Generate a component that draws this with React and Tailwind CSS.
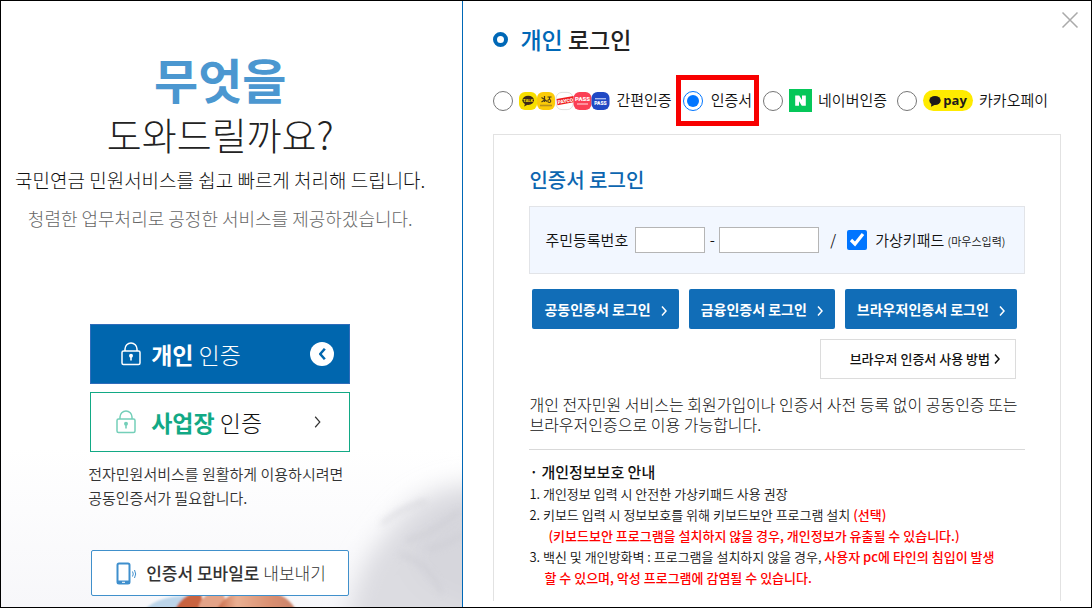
import React, { useState } from 'react';

const METHODS = [
  { id: 'simple', label: '간편인증' },
  { id: 'cert', label: '인증서' },
  { id: 'naver', label: '네이버인증' },
  { id: 'kakao', label: '카카오페이' },
];

const LockIcon = ({ className }) => (
  <svg viewBox="0 0 20 24" fill="none" stroke="currentColor" className={`h-6 w-5 ${className}`} aria-hidden="true">
    <rect x="1" y="9" width="18" height="13.500" rx="1.500" strokeWidth="1.500" />
    <path d="M4 9V7a6 6 0 0 1 12 0v2" strokeWidth="1.500" />
    <circle cx="10" cy="13.800" r="2" fill="currentColor" stroke="none" />
    <path d="M10 14.500v4" strokeWidth="1.600" />
  </svg>
);

const Chevron = ({ className, strokeWidth = 1.5 }) => (
  <svg viewBox="0 0 6 12" fill="none" stroke="currentColor" strokeWidth={strokeWidth} className={className} aria-hidden="true">
    <path d="M1 1.500 5 6 1 10.500" />
  </svg>
);

const PhoneIcon = () => (
  <svg viewBox="0 0 22 24" className="h-6 w-[22px] text-[#3f8fcd]" fill="none" stroke="currentColor" aria-hidden="true">
    <rect x="1.500" y="2.500" width="12" height="20" rx="1.500" strokeWidth="2" />
    <path d="M1.500 21h12" strokeWidth="3" />
    <path d="M6 21.300h3" stroke="#fff" strokeWidth="1" />
    <path d="M16.500 10.500q1.500 2.500 0 5M18.500 9q2.400 4 0 8" strokeWidth="1" />
  </svg>
);

const SimpleAuthLogos = () => (
  <svg viewBox="0 0 91 20" className="h-5 w-[91px]" aria-hidden="true" fontFamily="Roboto, sans-serif" fontWeight="900" textAnchor="middle">
    <rect x="0" y="1" width="18" height="18" rx="6" fill="#f7df00" />
    <ellipse cx="9.2" cy="9.3" rx="5.8" ry="4.6" fill="#3b2a1a" />
    <path d="M6 12.500 5.200 15.600 9 13.400z" fill="#3b2a1a" />
    <text x="9.2" y="11" fontSize="4.200" fill="#f7df00">TALK</text>
    <rect x="18" y="1" width="18" height="18" rx="6" fill="#fccb08" />
    <path d="M22.500 6.500l3 2M25.500 5v6M22.500 11l3-2M25.500 8.500l2.500 2M28.500 6h4M30.500 6v2.500" stroke="#4a3a1a" strokeWidth="1.200" fill="none" />
    <circle cx="30.300" cy="10" r="1.500" stroke="#4a3a1a" strokeWidth="1.100" fill="none" />
    <path d="M21 14.500h12" stroke="#b8921a" strokeWidth="1.600" />
    <rect x="37" y="1.400" width="17.200" height="17.200" rx="6" fill="#fff" stroke="#d5d5d5" strokeWidth=".8" />
    <path d="M37.500 8 54.500 5V11.200L38.500 14.200z" fill="#ef1c1c" />
    <text x="46.300" y="11.800" fontSize="5" fill="#fff" transform="rotate(-10 46 10)">PAYCO</text>
    <rect x="54.500" y="1" width="18" height="18" rx="6" fill="#fb3f55" />
    <text x="63.500" y="10" fontSize="6" fill="#fff">PASS</text>
    <path d="M58 13h11" stroke="#ffb0ba" strokeWidth="1.400" />
    <rect x="72.500" y="1" width="18" height="18" rx="6" fill="#2049c4" />
    <path d="M76 7.700h11" stroke="#a9bbf0" strokeWidth="1.400" />
    <text x="81.500" y="14" fontSize="5" fill="#fff">PASS</text>
  </svg>
);

const NaverLogo = () => (
  <svg viewBox="0 0 23 23" className="size-[23px]" aria-hidden="true">
    <rect width="23" height="23" fill="#05c759" />
    <path d="M6.200 6.500h4l2.800 4.500V6.500h3.800v10.300h-4L10 12.300v4.500H6.200z" fill="#fff" />
  </svg>
);

const KakaoPayLogo = () => (
  <span className="flex h-[21px] w-[50px] items-center justify-center gap-0.5 rounded-full bg-[#ffeb00]" aria-hidden="true">
    <svg viewBox="0 0 12 12" className="size-3" fill="#1e1a1a">
      <ellipse cx="6" cy="5.500" rx="5.700" ry="4.600" />
      <path d="M2.500 8 2 11.800 6.500 9.500z" />
    </svg>
    <span className="pb-0.5 font-['Open_Sans',sans-serif] text-[13px] leading-4 font-bold text-[#1e1a1a]">pay</span>
  </span>
);

const LOGOS = { simple: <SimpleAuthLogos />, naver: <NaverLogo />, kakao: <KakaoPayLogo /> };

// Soft photo behind the lower part of the left panel
const PanelBackdrop = () => (
  <svg viewBox="0 0 461 158" preserveAspectRatio="xMaxYMax slice" className="absolute inset-x-0 bottom-0 h-[158px] w-full" aria-hidden="true">
    <defs>
      <linearGradient id="haze" x1="0" y1="0" x2="0" y2="1">
        <stop offset="0" stopColor="#fff" />
        <stop offset="1" stopColor="#f7f7fa" />
      </linearGradient>
      <linearGradient id="skin" x1="0" y1="0" x2="1" y2="0">
        <stop offset="0" stopColor="#c96a48" />
        <stop offset=".25" stopColor="#eab093" />
        <stop offset=".7" stopColor="#d98e70" />
        <stop offset="1" stopColor="#c9826a" />
      </linearGradient>
      <filter id="soft" x="-40%" y="-40%" width="180%" height="180%"><feGaussianBlur stdDeviation="12" /></filter>
      <filter id="strand" x="-20%" y="-20%" width="140%" height="140%"><feGaussianBlur stdDeviation="3" /></filter>
      <filter id="edge" x="-20%" y="-20%" width="140%" height="140%"><feGaussianBlur stdDeviation="1" /></filter>
    </defs>
    <rect width="461" height="158" fill="url(#haze)" />
    <g filter="url(#soft)">
      <path d="M500 38C450 28 410 48 390 78C365 108 350 130 345 190H500z" fill="#dcdce1" />
      <path d="M500 50C450 50 430 70 415 95C400 120 430 150 500 160z" fill="#d6d6dc" />
    </g>
    <g filter="url(#strand)" fill="none" stroke="#c9c9d0" strokeWidth="4" opacity=".55">
      <path d="M380 75Q400 58 425 52" />
      <path d="M405 92Q430 85 458 62" />
      <path d="M398 105Q430 115 440 145" />
      <path d="M425 100Q445 98 461 85" />
    </g>
    <g filter="url(#edge)">
      <path d="M144 160Q158 147 186 147L184 160z" fill="#bcd5ea" />
      <path d="M174 160Q182 144 200 143L202 160z" fill="#c9633f" />
      <path d="M197 160Q200 142 222 142L226 160z" fill="#e3a388" />
      <path d="M216 160Q226 140 256 141Q284 142 294 160z" fill="url(#skin)" />
    </g>
  </svg>
);

const AuthPanel = () => (
  <section className="relative border-r border-[#0068b7] pr-[23px] text-center">
    <PanelBackdrop />
    <div className="relative pt-[49px]">
      <h1 className="text-[#222]">
        <span className="block text-[48px] leading-[56px] font-bold text-[#4b97d0]">무엇을</span>
        <span className="block text-[38px] leading-[56px] font-light">도와드릴까요?</span>
      </h1>
      <p className="mt-1 text-[19px] leading-7 font-light text-[#111]">국민연금 민원서비스를 쉽고 빠르게 처리해 드립니다.</p>
      <p className="mt-2.5 text-lg leading-7 font-light text-[#666]">청렴한 업무처리로 공정한 서비스를 제공하겠습니다.</p>

      <div className="mx-auto mt-[92px] flex w-[260px] flex-col gap-2 text-[23px]">
        <button className="flex h-[60px] items-center border border-[#2f6cba] bg-[#0066ae] pr-[15px] pl-[30px] text-white">
          <LockIcon className="mr-2.5" />
          <span className="font-light"><b className="font-bold">개인</b> 인증</span>
          <span className="ml-auto flex size-6 items-center justify-center rounded-full bg-white text-[#0066ae]">
            <Chevron className="h-3.5 w-[7px] rotate-180" strokeWidth={2.2} />
          </span>
        </button>
        <button className="flex h-[60px] items-center border border-[#12a985] bg-white pr-7 pl-[25px] text-[#111]">
          <LockIcon className="mr-[15px] text-[#74cfb9]" />
          <span className="font-light"><b className="font-bold text-[#12a985]">사업장</b> 인증</span>
          <Chevron className="ml-auto h-3.5 w-[7px] text-[#333]" strokeWidth={1} />
        </button>
      </div>

      <p className="mx-auto mt-2.5 w-[264px] text-left text-[15px] leading-6 font-[350] whitespace-nowrap text-[#333]">
        전자민원서비스를 원활하게 이용하시려면<br />공동인증서가 필요합니다.
      </p>

      <button className="mx-auto mt-10 flex h-[46px] w-[258px] items-center rounded-xs border border-[#4090cb] bg-white pl-6 text-[17px] text-[#333]">
        <PhoneIcon />
        <span className="ml-2 font-light"><b className="font-medium">인증서 모바일로</b> 내보내기</span>
      </button>
    </div>
  </section>
);

const MethodPicker = ({ value, onChange }) => (
  <div role="radiogroup" aria-label="로그인 방법" className="mt-5 flex items-center gap-1 text-[15px] text-[#111]">
    {METHODS.map(({ id, label }) => (
      <label
        key={id}
        className={`flex items-center whitespace-nowrap font-[350] ${
          id === 'cert' ? 'h-[51px] gap-2 border-5 border-[#f80000] px-0.5' : 'gap-1.5'
        } ${id === 'kakao' ? 'ml-1.5' : ''}`}
      >
        <input type="radio" name="method" className="size-5" checked={value === id} onChange={() => onChange(id)} />
        {LOGOS[id]}
        <span>{label}</span>
      </label>
    ))}
  </div>
);

const LoginButton = ({ children }) => (
  <button className="flex h-10 items-center gap-2.5 rounded-xs bg-[#116db7] px-3 text-sm font-bold whitespace-nowrap text-white">
    {children}
    <Chevron className="mt-1 h-3 w-1.5" />
  </button>
);

const CertLogin = () => {
  const [keypad, setKeypad] = useState(true);

  return (
    <div className="mt-2 mb-1.5 flex grow flex-col border border-b-0 border-[#e2e2e2] px-[35px] pt-[31px]">
      <h3 className="text-xl leading-7 font-medium text-[#0c66b0]">인증서 로그인</h3>

      <div className="mt-3 flex h-[68px] items-center border border-[#e2e4e8] bg-[#f2f7ff] px-[15px] text-[15px] font-[350] whitespace-nowrap text-[#111]">
        <label htmlFor="rrn1" className="mr-[7px]">주민등록번호</label>
        <input id="rrn1" type="text" maxLength={6} className="h-[26px] w-[70px] border border-[#b5b5b5] bg-white px-1" />
        <span className="w-3.5 text-center">-</span>
        <input type="password" maxLength={7} aria-label="주민등록번호 뒷자리" className="h-[26px] w-[100px] border border-[#b5b5b5] bg-white px-1" />
        <span className="w-7 text-center">/</span>
        <label className="flex items-center gap-2">
          <input type="checkbox" className="size-5" checked={keypad} onChange={(e) => setKeypad(e.target.checked)} />
          <span>가상키패드 <small className="text-[11px]">(마우스입력)</small></span>
        </label>
      </div>

      <div className="mt-[15px] flex gap-2.5 px-[3px]">
        <LoginButton>공동인증서 로그인</LoginButton>
        <LoginButton>금융인증서 로그인</LoginButton>
        <LoginButton>브라우저인증서 로그인</LoginButton>
      </div>
      <button className="mt-2.5 mr-[9px] flex h-10 items-center gap-1 self-end border border-[#dcdcdc] bg-white pr-[15px] pl-[29px] text-[13px] font-medium text-[#111]">
        브라우저 인증서 사용 방법
        <Chevron className="h-3 w-1.5" />
      </button>

      <p className="mt-[15px] border-b border-[#d9d9d9] pb-[15px] text-base leading-5 font-light text-[#111]">
        개인 전자민원 서비스는 회원가입이나 인증서 사전 등록 없이 공동인증 또는 브라우저인증으로 이용 가능합니다.
      </p>

      <h4 className="mt-[11px] text-[15px] leading-[22px] font-medium text-[#111]">· 개인정보보호 안내</h4>
      <ol className="text-[13px] leading-[21px] font-[350] whitespace-nowrap text-[#111]">
        <li>1. 개인정보 입력 시 안전한 가상키패드 사용 권장</li>
        <li>
          2. 키보드 입력 시 정보보호를 위해 키보드보안 프로그램 설치 <em className="font-medium text-[#f00] not-italic">(선택)</em>
          <em className="block pl-[19px] font-medium text-[#f00] not-italic">(키보드보안 프로그램을 설치하지 않을 경우, 개인정보가 유출될 수 있습니다.)</em>
        </li>
        <li>
          3. 백신 및 개인방화벽 : 프로그램을 설치하지 않을 경우, <em className="font-medium text-[#f00] not-italic">사용자 pc에 타인의 침입이 발생</em>
          <em className="block pl-[15px] font-medium text-[#f00] not-italic">할 수 있으며, 악성 프로그램에 감염될 수 있습니다.</em>
        </li>
      </ol>
    </div>
  );
};

const App = () => {
  const [method, setMethod] = useState('cert');

  return (
    <main className="grid min-h-screen grid-cols-[14fr_19fr] border border-black bg-white font-['Noto_Sans_CJK_KR',sans-serif]">
      <AuthPanel />
      <section className="relative flex flex-col px-[30px] pt-[22px]">
        <button aria-label="닫기" className="absolute top-2.5 right-3 text-[#aaa]">
          <svg viewBox="0 0 18 18" className="size-[18px]" fill="none" stroke="currentColor" strokeWidth="1.500">
            <path d="m1.500 1.500 15 15m0-15-15 15" />
          </svg>
        </button>
        <h2 className="flex items-center gap-3 text-[23px] leading-8 font-medium text-[#222]">
          <span className="size-[15px] rounded-full border-4 border-[#0068b7]" />
          <span><span className="text-[#0068b7]">개인</span> 로그인</span>
        </h2>
        <MethodPicker value={method} onChange={setMethod} />
        <CertLogin />
      </section>
    </main>
  );
};

export default App;
